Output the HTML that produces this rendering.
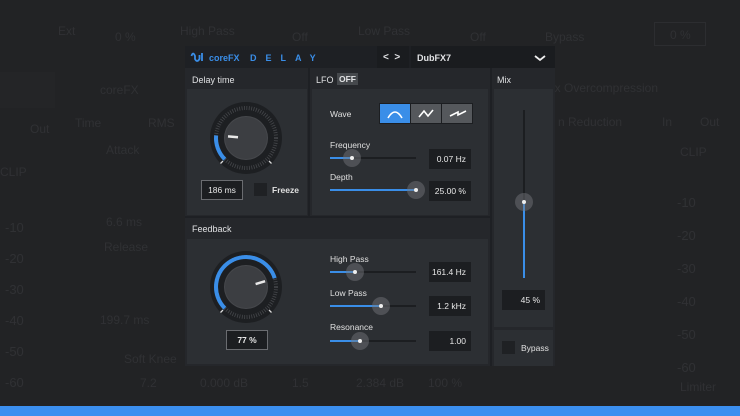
<!DOCTYPE html>
<html><head><meta charset="utf-8"><style>
*{margin:0;padding:0;box-sizing:border-box}
body{width:740px;height:416px;background:#222325;position:relative;overflow:hidden;font-family:"Liberation Sans",sans-serif;color:#e2e3e5}
.a{position:absolute}
.dim{position:absolute;color:#303134;font-size:12px;white-space:nowrap}
.hdr{font-size:9px;color:#dfe0e2}
.inner{position:absolute;background:#2c2f33}
.vb{position:absolute;background:#1c1e21;font-size:8.5px;text-align:right;padding-right:5px;line-height:20px;color:#e8e8e8;white-space:nowrap;height:20px}
.lbl{position:absolute;font-size:8.5px;color:#e0e0e0;white-space:nowrap}
.trk{position:absolute;height:2px;background:#1c1e21}
.fill{position:absolute;height:2px;background:#3a8ee8}
.th{position:absolute;width:18px;height:18px;border-radius:50%;background:rgba(120,122,126,.45)}
.th:after{content:"";position:absolute;left:7px;top:7px;width:4px;height:4px;border-radius:50%;background:#eee}
</style></head><body>
<div class="dim" style="left:58px;top:24px">Ext</div>
<div class="dim" style="left:115px;top:30px">0 %</div>
<div class="dim" style="left:180px;top:24px">High Pass</div>
<div class="dim" style="left:292px;top:30px">Off</div>
<div class="dim" style="left:358px;top:24px">Low Pass</div>
<div class="dim" style="left:470px;top:30px">Off</div>
<div class="dim" style="left:545px;top:30px">Bypass</div>
<div class="a" style="left:654px;top:22px;width:52px;height:24px;border:1px solid #2c2d30"></div>
<div class="dim" style="left:670px;top:28px">0 %</div>
<div class="a" style="left:0;top:72px;width:55px;height:36px;background:#242527"></div>
<div class="dim" style="left:100px;top:83px">coreFX</div>
<div class="dim" style="left:552px;top:81px">ix Overcompression</div>
<div class="dim" style="left:30px;top:122px">Out</div>
<div class="dim" style="left:75px;top:116px">Time</div>
<div class="dim" style="left:148px;top:116px">RMS</div>
<div class="dim" style="left:106px;top:143px">Attack</div>
<div class="dim" style="left:106px;top:215px">6.6 ms</div>
<div class="dim" style="left:104px;top:240px">Release</div>
<div class="dim" style="left:100px;top:313px">199.7 ms</div>
<div class="dim" style="left:124px;top:352px">Soft Knee</div>
<div class="dim" style="left:140px;top:376px">7.2</div>
<div class="dim" style="left:558px;top:115px">n Reduction</div>
<div class="dim" style="left:662px;top:115px">In</div>
<div class="dim" style="left:700px;top:115px">Out</div>
<div class="dim" style="left:0;top:165px">CLIP</div>
<div class="dim" style="left:680px;top:145px">CLIP</div>
<div class="dim" style="left:5px;top:212px;line-height:31px;font-size:13px">-10<br>-20<br>-30<br>-40<br>-50<br>-60</div>
<div class="dim" style="left:677px;top:186px;line-height:33px;font-size:13px">-10<br>-20<br>-30<br>-40<br>-50<br>-60</div>
<div class="dim" style="left:680px;top:380px">Limiter</div>
<div class="dim" style="left:200px;top:376px">0.000 dB</div>
<div class="dim" style="left:292px;top:376px">1.5</div>
<div class="dim" style="left:356px;top:376px">2.384 dB</div>
<div class="dim" style="left:428px;top:376px">100 %</div>
<div class="a" style="left:0;top:406px;width:740px;height:10px;background:#3b8ff0"></div>

<div class="a" style="left:185px;top:46px;width:370px;height:320px;background:#25272b"></div>
<div class="a" style="left:185px;top:46px;width:370px;height:22px;background:#1e2024"></div>
<svg class="a" style="left:190px;top:50px" width="14" height="14" viewBox="0 0 14 14"><path d="M1.5 6 Q3 1 5 6 L5 9 Q7 13 9.5 9 L9.5 5 M12 3 L12 11" fill="none" stroke="#3a8ee8" stroke-width="1.8"/></svg>
<div class="a" style="left:209px;top:53px;font-size:9px;color:#3a8ee8;font-weight:bold">coreFX</div>
<div class="a" style="left:250px;top:53px;font-size:9px;color:#3a8ee8;font-weight:bold;letter-spacing:9px">DELAY</div>
<div class="a" style="left:377px;top:46px;width:32px;height:22px;background:#1a1c1f"></div>
<div class="a" style="left:383px;top:52px;font-size:10px;font-weight:bold">&lt;&nbsp;&nbsp;&gt;</div>
<div class="a" style="left:411px;top:46px;width:144px;height:22px;background:#1a1c1f"></div>
<div class="a" style="left:417px;top:53px;font-size:9px;font-weight:bold">DubFX7</div>
<svg class="a" style="left:534px;top:55px" width="12" height="7"><path d="M1 1 L6 5 L11 1" fill="none" stroke="#eee" stroke-width="1.8"/></svg>

<div class="a" style="left:308px;top:68px;width:2px;height:150px;background:#1e2024"></div>
<div class="a" style="left:490px;top:68px;width:2px;height:298px;background:#1e2024"></div>
<div class="a" style="left:185px;top:216px;width:305px;height:2px;background:#1e2024"></div>

<div class="a hdr" style="left:192px;top:75px">Delay time</div>
<div class="a hdr" style="left:316px;top:75px">LFO</div>
<div class="a" style="left:337px;top:73px;width:21px;height:12px;background:#45484c;font-size:8.5px;font-weight:bold;text-align:center;line-height:12px">OFF</div>
<div class="a hdr" style="left:497px;top:75px">Mix</div>
<div class="a hdr" style="left:192px;top:224px">Feedback</div>

<div class="inner" style="left:187px;top:89px;width:120px;height:126px"></div>
<div class="inner" style="left:312px;top:89px;width:176px;height:126px"></div>
<div class="inner" style="left:494px;top:89px;width:59px;height:238px"></div>
<div class="inner" style="left:494px;top:330px;width:59px;height:36px"></div>
<div class="inner" style="left:187px;top:239px;width:301px;height:125px"></div>

<svg class="a" style="left:206px;top:98px" width="80" height="80" viewBox="0 0 80 80">
<circle cx="40" cy="40" r="36" fill="#1d1f22"/>
<circle cx="40" cy="40" r="30" fill="none" stroke="#45474b" stroke-width="4" stroke-dasharray="0.8 1.6"/>
<path d="M18.8 61.2 A30 30 0 0 1 10.1 37.4" fill="none" stroke="#3a8ee8" stroke-width="4"/>
<circle cx="40" cy="40" r="22" fill="#46484c"/>
<circle cx="40" cy="40" r="21" fill="#3c3e42"/>
<path d="M17 63 L14.5 65.5 M63 63 L65.5 65.5" stroke="#ddd" stroke-width="1.3"/>
<path d="M22 38.4 L32 39.3" stroke="#e8e8e8" stroke-width="2.5"/>
</svg>
<div class="vb" style="left:201px;top:180px;width:42px;border:1px solid #6a6c70;text-align:center;padding:0;line-height:18px">186 ms</div>
<div class="a" style="left:254px;top:183px;width:13px;height:13px;background:#1f2124"></div>
<div class="lbl" style="left:272px;top:185px;font-weight:bold">Freeze</div>

<div class="lbl" style="left:330px;top:109px">Wave</div>
<div class="a" style="left:379px;top:103px;width:94px;height:21px;background:#1c1e21"></div>
<div class="a" style="left:380px;top:104px;width:30px;height:19px;background:#3a8ee8"></div>
<div class="a" style="left:411px;top:104px;width:30px;height:19px;background:#55585c"></div>
<div class="a" style="left:442px;top:104px;width:30px;height:19px;background:#55585c"></div>
<svg class="a" style="left:380px;top:104px" width="92" height="19"><path d="M8 14 Q15 2 22 14" fill="none" stroke="#fff" stroke-width="1.6"/><path d="M39 13 L44 7 L48 12 L53 6" fill="none" stroke="#fff" stroke-width="1.6"/><path d="M70 12 L78 8 L78 11 L86 7" fill="none" stroke="#fff" stroke-width="1.6"/></svg>

<div class="lbl" style="left:330px;top:140px">Frequency</div>
<div class="trk" style="left:330px;top:157px;width:86px"></div>
<div class="fill" style="left:330px;top:157px;width:22px"></div>
<div class="th" style="left:343px;top:149px"></div>
<div class="vb" style="left:429px;top:149px;width:42px">0.07 Hz</div>
<div class="lbl" style="left:330px;top:172px">Depth</div>
<div class="trk" style="left:330px;top:189px;width:86px"></div>
<div class="fill" style="left:330px;top:189px;width:86px"></div>
<div class="th" style="left:407px;top:181px"></div>
<div class="vb" style="left:429px;top:181px;width:42px">25.00 %</div>

<div class="a" style="left:523px;top:110px;width:2px;height:168px;background:#1c1e21"></div>
<div class="a" style="left:523px;top:201px;width:2px;height:77px;background:#3a8ee8"></div>
<div class="th" style="left:515px;top:193px"></div>
<div class="vb" style="left:502px;top:290px;width:43px">45 %</div>
<div class="a" style="left:502px;top:341px;width:13px;height:13px;background:#1f2124"></div>
<div class="lbl" style="left:521px;top:343px">Bypass</div>

<svg class="a" style="left:206px;top:247px" width="80" height="80" viewBox="0 0 80 80">
<circle cx="40" cy="40" r="36" fill="#1d1f22"/>
<circle cx="40" cy="40" r="30" fill="none" stroke="#45474b" stroke-width="4" stroke-dasharray="0.8 1.6"/>
<path d="M18.8 61.2 A30 30 0 1 1 68.7 31.2" fill="none" stroke="#3a8ee8" stroke-width="4"/>
<circle cx="40" cy="40" r="22" fill="#46484c"/>
<circle cx="40" cy="40" r="21" fill="#3c3e42"/>
<path d="M17 63 L14.5 65.5 M63 63 L65.5 65.5" stroke="#ddd" stroke-width="1.3"/>
<path d="M49.6 37.1 L59.1 34.2" stroke="#e8e8e8" stroke-width="2.5"/>
</svg>
<div class="vb" style="left:226px;top:330px;width:42px;border:1px solid #6a6c70;text-align:center;padding:0;line-height:18px;font-weight:bold">77 %</div>

<div class="lbl" style="left:330px;top:254px">High Pass</div>
<div class="trk" style="left:330px;top:271px;width:86px"></div>
<div class="fill" style="left:330px;top:271px;width:25px"></div>
<div class="th" style="left:346px;top:263px"></div>
<div class="vb" style="left:429px;top:262px;width:42px">161.4 Hz</div>
<div class="lbl" style="left:330px;top:288px">Low Pass</div>
<div class="trk" style="left:330px;top:305px;width:86px"></div>
<div class="fill" style="left:330px;top:305px;width:51px"></div>
<div class="th" style="left:372px;top:297px"></div>
<div class="vb" style="left:429px;top:296px;width:42px">1.2 kHz</div>
<div class="lbl" style="left:330px;top:322px">Resonance</div>
<div class="trk" style="left:330px;top:340px;width:86px"></div>
<div class="fill" style="left:330px;top:340px;width:30px"></div>
<div class="th" style="left:351px;top:332px"></div>
<div class="vb" style="left:429px;top:331px;width:42px">1.00</div>
</body></html>
